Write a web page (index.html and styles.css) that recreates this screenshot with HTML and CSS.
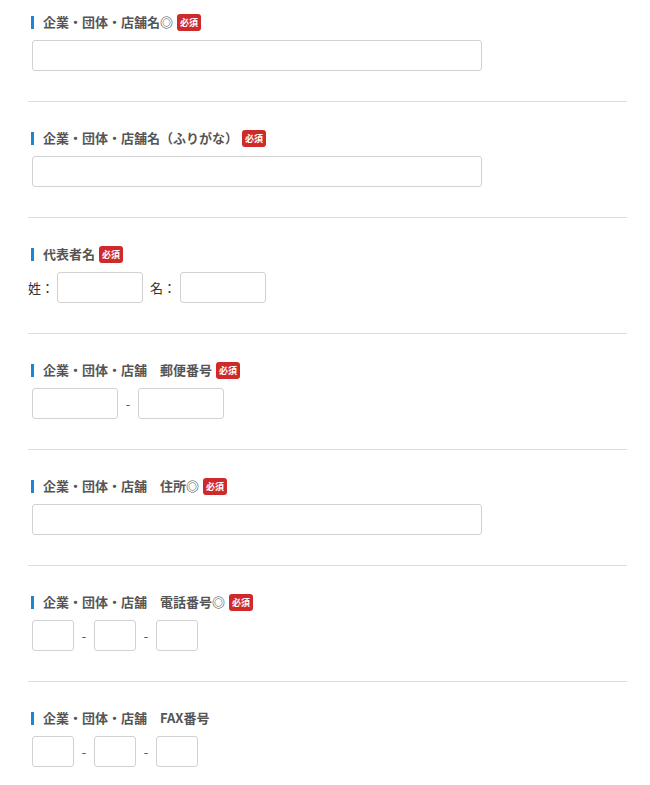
FILE: index.html
```html
<!DOCTYPE html>
<html lang="ja">
<head>
<meta charset="utf-8">
<link rel="stylesheet" href="styles.css">
</head>
<body>
<div class="form">
  <div class="section first">
    <div class="label"><span class="title">企業・団体・店舗名◎</span><span class="req">必須</span></div>
    <div class="row"><input class="inp wide" type="text"></div>
  </div>
  <div class="section">
    <div class="label"><span class="title">企業・団体・店舗名（ふりがな）</span><span class="req">必須</span></div>
    <div class="row"><input class="inp wide" type="text"></div>
  </div>
  <div class="section">
    <div class="label"><span class="title">代表者名</span><span class="req">必須</span></div>
    <div class="row name">
      <span class="cap">姓：</span><input class="inp mid" type="text">
      <span class="cap cap2">名：</span><input class="inp mid" type="text">
    </div>
  </div>
  <div class="section">
    <div class="label"><span class="title">企業・団体・店舗　郵便番号</span><span class="req">必須</span></div>
    <div class="row"><input class="inp mid" type="text"><span class="dash">-</span><input class="inp mid" type="text"></div>
  </div>
  <div class="section">
    <div class="label"><span class="title">企業・団体・店舗　住所◎</span><span class="req">必須</span></div>
    <div class="row"><input class="inp wide" type="text"></div>
  </div>
  <div class="section">
    <div class="label"><span class="title">企業・団体・店舗　電話番号◎</span><span class="req">必須</span></div>
    <div class="row"><input class="inp small" type="text"><span class="dash">-</span><input class="inp small" type="text"><span class="dash">-</span><input class="inp small" type="text"></div>
  </div>
  <div class="section">
    <div class="label"><span class="title">企業・団体・店舗　FAX番号</span></div>
    <div class="row"><input class="inp small" type="text"><span class="dash">-</span><input class="inp small" type="text"><span class="dash">-</span><input class="inp small" type="text"></div>
  </div>
</div>
</body>
</html>
```
FILE: styles.css
```css
html, body {
  margin: 0;
  padding: 0;
  background: #fff;
}
body {
  font-family: "Noto Sans CJK JP", "Noto Sans", sans-serif;
  color: #333;
}
.form {
  margin-left: 28px;
  width: 599px;
}
.section {
  padding: 26px 0 30px;
  border-bottom: 1px solid #dcdcdc;
}
.section.first {
  padding-top: 12px;
}
.label {
  display: flex;
  align-items: center;
  height: 20px;
  margin-bottom: 8px;
  padding-left: 3px;
}
.title {
  font-size: 13px;
  font-weight: 700;
  color: #555;
  line-height: 20px;
  border-left: 3px solid #1a86d8;
  padding-left: 9px;
  height: 13px;
  display: flex;
  align-items: center;
}
.req {
  margin-left: 4px;
  background: #cf2a2a;
  color: #fff;
  font-size: 9px;
  font-weight: 700;
  border-radius: 3px;
  width: 24px;
  height: 17px;
  display: flex;
  align-items: center;
  justify-content: center;
  line-height: 1;
}
.row {
  display: flex;
  align-items: center;
  padding-left: 4px;
  height: 31px;
}
.row.name {
  padding-left: 0;
}
.inp {
  box-sizing: border-box;
  height: 31px;
  border: 1px solid #d2d2d2;
  border-radius: 3px;
  background: #fff;
  margin: 0;
  padding: 0 6px;
  outline: none;
}
.inp.wide { width: 450px; }
.inp.mid { width: 86px; }
.inp.small { width: 42px; }
.cap {
  font-size: 13px;
  color: #333;
  margin-right: 3px;
  width: 26px;
}
.cap2 {
  margin-left: 7px;
  margin-right: 4px;
}
.dash {
  font-size: 13px;
  color: #555;
  width: 20px;
  text-align: center;
}
```
